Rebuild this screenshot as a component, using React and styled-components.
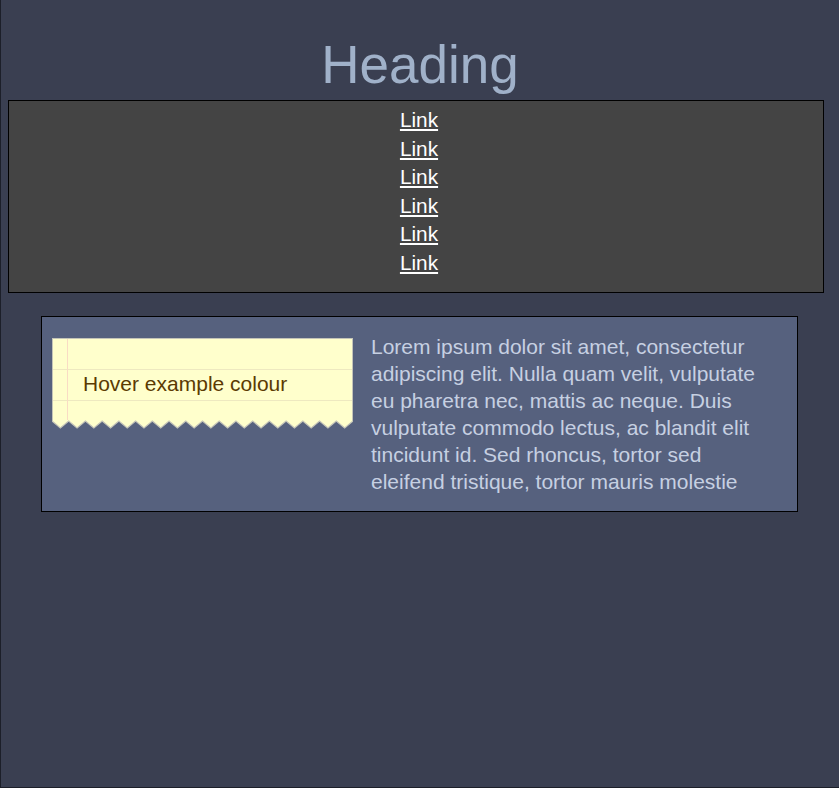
import styled, { createGlobalStyle } from "styled-components";

const GlobalStyle = createGlobalStyle`
    html, body {
        margin: 0;
        padding: 0;
        background: #3a3f51;
        font-family: "Liberation Sans", Arial, sans-serif;
    }
`

const Page = styled.div`
    box-sizing: border-box;
    min-height: 788px;
    border-left: 1px solid #1c1f29;
    border-bottom: 1px solid #1c1f29;
    background: #3a3f51;
    overflow: hidden;
`

const Heading = styled.h1`
    margin: 34px 0 5px;
    font-size: 53px;
    line-height: 61px;
    font-weight: 400;
    text-align: center;
    color: #a0b1c9;
`

const Nav = styled.nav`
    box-sizing: border-box;
    width: 816px;
    margin-left: 7px;
    padding: 5px 0 15px 6px;
    background: #444444;
    border: 1px solid #000;
    display: flex;
    flex-direction: column;
    align-items: center;
`

const NavLink = styled.a`
    color: #ffffff;
    font-size: 20.8px;
    line-height: 28.5px;
    text-decoration: underline;
`

const Card = styled.section`
    box-sizing: border-box;
    width: 757px;
    margin: 23px 0 0 40px;
    padding: 16px 10px 16px;
    background: #56617e;
    border: 1px solid #000;
    display: flex;
    align-items: flex-start;
`

const Note = styled.div`
    flex: 0 0 301px;
    margin-top: 5px;
`

const NotePaper = styled.div`
    box-sizing: border-box;
    height: 82px;
    border: 1px solid #c4c4b8;
    border-bottom: none;
    background-color: #ffffcc;
    background-image:
        linear-gradient(90deg, transparent 14px, #f9dcc4 14px, #f9dcc4 15px, transparent 15px),
        repeating-linear-gradient(180deg, transparent 0, transparent 30px, #eee9c0 30px, #eee9c0 31px);
    padding: 30px 0 0 30px;
    color: #5b3a02;
    font-size: 21px;
    line-height: 30px;
`

const Zigzag = styled.svg`
    display: block;
    width: 301px;
    height: 9px;
`

const Text = styled.p`
    flex: 1;
    margin: 0;
    padding: 0 20px 0 18px;
    color: #c6d0e2;
    font-size: 21px;
    line-height: 27px;
`

function ZigzagEdge() {
    const teeth = 18
    const w = 301 / teeth
    let edge = ""
    for (let i = 0; i < teeth; i++) {
        edge += `${(i * w).toFixed(2)},1 ${(i * w + w / 2).toFixed(2)},8 `
    }
    edge += "301,1"
    return (
        <Zigzag viewBox="0 0 301 9" preserveAspectRatio="none">
            <polygon points={`0,0 ${edge} 301,0`} fill="#ffffcc" />
            <polyline points={edge} fill="none" stroke="#c4c4b8" strokeWidth="1.2" />
            <line x1="0.5" y1="0" x2="0.5" y2="1.5" stroke="#c4c4b8" />
            <line x1="300.5" y1="0" x2="300.5" y2="1.5" stroke="#c4c4b8" />
        </Zigzag>
    )
}

export default function App() {
    const links = ["Link", "Link", "Link", "Link", "Link", "Link"]
    return (
        <Page>
            <GlobalStyle />
            <Heading>Heading</Heading>
            <Nav>
                {links.map((l, i) => <NavLink key={i} href="#">{l}</NavLink>)}
            </Nav>
            <Card>
                <Note>
                    <NotePaper>Hover example colour</NotePaper>
                    <ZigzagEdge />
                </Note>
                <Text>
                    Lorem ipsum dolor sit amet, consectetur adipiscing elit. Nulla quam velit, vulputate eu pharetra nec, mattis ac neque. Duis vulputate commodo lectus, ac blandit elit tincidunt id. Sed rhoncus, tortor sed eleifend tristique, tortor mauris molestie
                </Text>
            </Card>
        </Page>
    )
}
